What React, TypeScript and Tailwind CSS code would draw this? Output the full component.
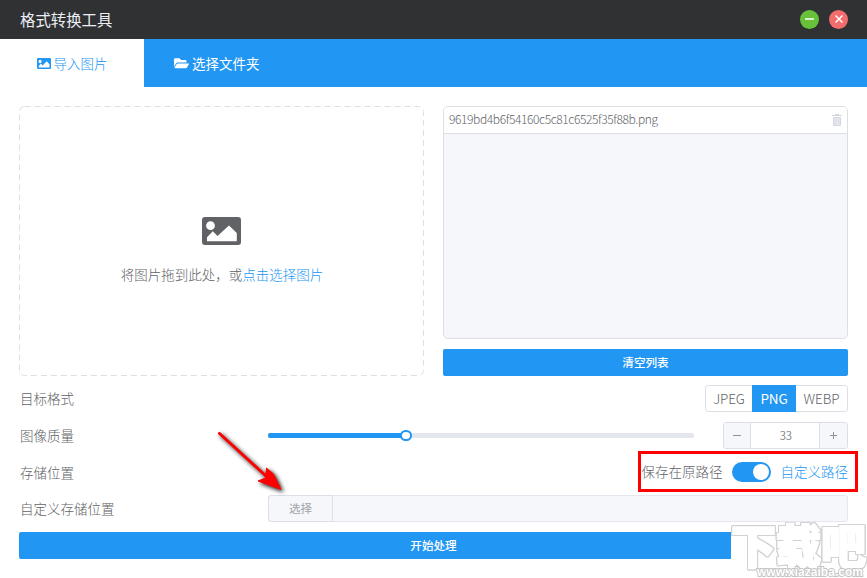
import React from 'react';

const FORMATS = ['JPEG', 'PNG', 'WEBP'];

const ImageIcon: React.FC<{ className?: string }> = ({ className }) => (
  <svg className={className} viewBox="0 0 39 28" preserveAspectRatio="none" fill="currentColor">
    <path fillRule="evenodd" d="M3 0h33a3 3 0 0 1 3 3v22a3 3 0 0 1-3 3H3a3 3 0 0 1-3-3V3a3 3 0 0 1 3-3zM8.500 4.300a4.400 4.400 0 1 0 0 8.800 4.400 4.400 0 0 0 0-8.800zM5 24.300h29.800v-8.300L27 8.500 15.500 19l-4.700-4.700L5 20.300z" />
  </svg>
);

const FolderIcon: React.FC<{ className?: string }> = ({ className }) => (
  <svg className={className} viewBox="0 0 576 512" preserveAspectRatio="none" fill="currentColor">
    <path d="M573 295l-73 124c-9 16-31 29-53 29H44c-18 0-26-12-20-24l73-124c9-16 31-28 53-28h403c18 0 26 11 20 23zM151 240h329v-48c0-27-21-48-48-48H272l-64-64H48C21 80 0 101 0 128v278l70-119c17-29 48-47 81-47z" />
  </svg>
);

const TrashIcon: React.FC = () => (
  <svg className="h-3 w-2.5" viewBox="0 0 10 12" fill="none">
    <path d="M3 .5h4M0 1.500h10" stroke="#d3d7df" />
    <path d="M1.500 3.500h7v8h-7z" fill="#e4e7ed" stroke="#d3d7df" />
    <path d="M3.500 5v5M6.500 5v5" stroke="#dcdfe6" />
  </svg>
);

const App: React.FC = () => {
  return (
    <div className="relative h-[578px] w-[867px] overflow-hidden bg-white font-['Noto_Sans_CJK_SC',sans-serif] text-[13.5px] leading-5 font-light text-[#606266]">
      <header className="flex h-[39px] items-center justify-between bg-[#303133] pr-[19px] pl-5">
        <h1 className="pb-0.5 text-[15.4px] font-normal text-[#ebeef5]">格式转换工具</h1>
        <div className="flex gap-2.5">
          <button className="flex size-[19px] items-center justify-center rounded-full bg-[#67c23a]">
            <svg className="size-[9px]" viewBox="0 0 9 9" stroke="#fff" strokeOpacity=".75"><path d="M0 4h9" strokeWidth="2" /></svg>
          </button>
          <button className="flex size-[19px] items-center justify-center rounded-full bg-[#f56c6c] pb-px">
            <svg className="size-[8px]" viewBox="0 0 8 8" stroke="#fff"><path d="M.5.5l7 7M7.500.5l-7 7" strokeWidth="1.500" /></svg>
          </button>
        </div>
      </header>

      <nav className="flex h-12 bg-[#2196f3] text-white">
        <div className="flex w-36 items-center bg-white pl-[37px] text-[#2196f3]">
          <ImageIcon className="mr-[2.500px] h-[11px] w-3.5" />
          导入图片
        </div>
        <div className="flex items-center pl-[30px] font-normal">
          <FolderIcon className="mr-[3px] h-3.5 w-[15px]" />
          选择文件夹
        </div>
      </nav>

      <main className="px-[19px] pt-[19px]">
        <section className="flex h-[270px] gap-[19px]">
          <div className="relative flex w-[405px] flex-col items-center pt-[111px]">
            <svg className="absolute inset-0 size-full" fill="none">
              <rect x=".5" y=".5" width="404" height="269" rx="5" stroke="#dcdfe6" strokeDasharray="6 4" />
            </svg>
            <ImageIcon className="h-7 w-[39px]" />
            <p className="mt-[19px] pl-px">将图片拖到此处，或<span className="text-[#2196f3]">点击选择图片</span></p>
          </div>
          <div className="flex w-[405px] flex-col gap-2.5">
            <div className="h-[233px] overflow-hidden rounded-[5px] border border-[#dcdfe6] bg-[#f5f7fa]">
              <div className="flex h-[27px] items-center justify-between border-b border-[#dcdfe6] bg-white px-[5px]">
                <span className="pb-0.5 text-[12px] tracking-[-0.39px]">9619bd4b6f54160c5c81c6525f35f88b.png</span>
                <TrashIcon />
              </div>
            </div>
            <button className="h-[27px] rounded-[2px] bg-[#2196f3] pb-0.5 text-[11.6px] font-medium text-white">清空列表</button>
          </div>
        </section>

        <section>
          <div className="mt-[9px] flex h-[27px] items-center justify-between">
            <span className="pb-0.5 pl-px">目标格式</span>
            <div className="flex h-[27px] w-[143px] rounded-[3px] border border-[#dcdfe6]">
              {FORMATS.map((format) => (
                <button key={format} className={format === 'PNG' ? '-my-px w-11 bg-[#2196f3] pb-0.5 font-normal tracking-[-0.2px] text-white' : 'w-[46px] pb-0.5 tracking-[-0.1px] last:flex-1'}>{format}</button>
              ))}
            </div>
          </div>
          <div className="mt-2.5 flex h-[27px] items-center">
            <span className="w-[249px] pb-0.5 pl-px">图像质量</span>
            <div className="relative h-[5px] w-[426px] rounded-[2px] bg-[#e4e7ed]">
              <div className="h-full w-[137px] rounded-l-[2px] bg-[#2196f3]" />
              <div className="absolute -top-[3px] left-[132px] h-[11px] w-3 rounded-full border-2 border-[#2196f3] bg-white" />
            </div>
            <div className="ml-[29px] flex h-[27px] w-[125px] overflow-hidden rounded-[3px] border border-[#dcdfe6] text-[12px]">
              <button className="flex w-[27px] items-center justify-center border-r border-[#dcdfe6] bg-[#f5f7fa]">
                <svg className="h-[9px] w-2" viewBox="0 0 8 9" stroke="#909399"><path d="M0 4.500h8" /></svg>
              </button>
              <span className="flex flex-1 items-center justify-center pb-0.5 pl-px tracking-[-0.4px]">33</span>
              <button className="flex w-[28px] items-center justify-center border-l border-[#dcdfe6] bg-[#f5f7fa]">
                <svg className="size-[9px]" viewBox="0 0 9 9" stroke="#909399"><path d="M1 4.500h7M4.500 1v7" /></svg>
              </button>
            </div>
          </div>
          <div className="mt-2.5 flex h-[27px] items-center justify-between pb-0.5">
            <span className="pl-px">存储位置</span>
            <div className="flex items-center">
              <span className="pb-0.5">保存在原路径</span>
              <div className="mr-2.5 ml-[9px] flex h-5 w-[39px] items-center justify-end rounded-full bg-[#2196f3] pr-[2px]">
                <div className="size-4 rounded-full bg-white" />
              </div>
              <span className="pb-0.5 text-[#2196f3]">自定义路径</span>
            </div>
          </div>
          <div className="mt-[9px] flex h-[27px] items-center">
            <span className="w-[249px] pb-0.5 pl-px">自定义存储位置</span>
            <div className="flex h-[27px] flex-1 rounded-[3px] border border-[#e4e7ed] bg-[#f5f7fa]">
              <button className="-my-px -ml-px w-[65px] rounded-l-[3px] border border-[#dcdfe6] pb-0.5 text-[11.6px] font-normal text-[#a0a3a9]">选择</button>
            </div>
          </div>
        </section>

        <button className="mt-2.5 h-[27px] w-full rounded-[2px] bg-[#2196f3] pb-px text-[11.6px] font-medium text-white">开始处理</button>
      </main>

      {/* annotations */}
      <div className="absolute top-[451px] left-[638px] h-[41px] w-[220px] border-3 border-[#ff0000]" />
      <svg className="absolute top-[424px] left-[209px] h-20 w-24 drop-shadow-[2px_2px_2px_rgba(0,0,0,0.9)]" viewBox="0 0 96 80">
        <path d="M10.500 9.500l47 43" stroke="#f00" strokeWidth="3" strokeLinecap="round" />
        <path d="M72 65.500L49 57l7.500-3 1-10 7 6z" fill="#f00" stroke="#f00" />
      </svg>

      {/* watermark */}
      <div className="absolute top-[522px] left-[731px] h-14 w-[136px] bg-white">
        <svg className="size-full" viewBox="0 0 136 56" fontFamily="'Noto Sans CJK SC', sans-serif">
          <text className="[filter:drop-shadow(1px_0_0_#d2d2d2)_drop-shadow(-1px_0_0_#d2d2d2)_drop-shadow(0_1px_0_#d2d2d2)_drop-shadow(0_-1px_0_#d2d2d2)]" x="0" y="41" fontSize="46" fontWeight="900" textLength="135" lengthAdjust="spacingAndGlyphs" fill="#fff" stroke="#fff" strokeWidth="2">下载吧</text>
          <text x="26" y="54" fontSize="12" fontFamily="'Liberation Sans', sans-serif" fontWeight="700" textLength="106" fill="#fff" stroke="#c4c4c4" strokeWidth="1.800" paintOrder="stroke">www.xiazaiba.com</text>
        </svg>
      </div>
    </div>
  );
};

export default App;
